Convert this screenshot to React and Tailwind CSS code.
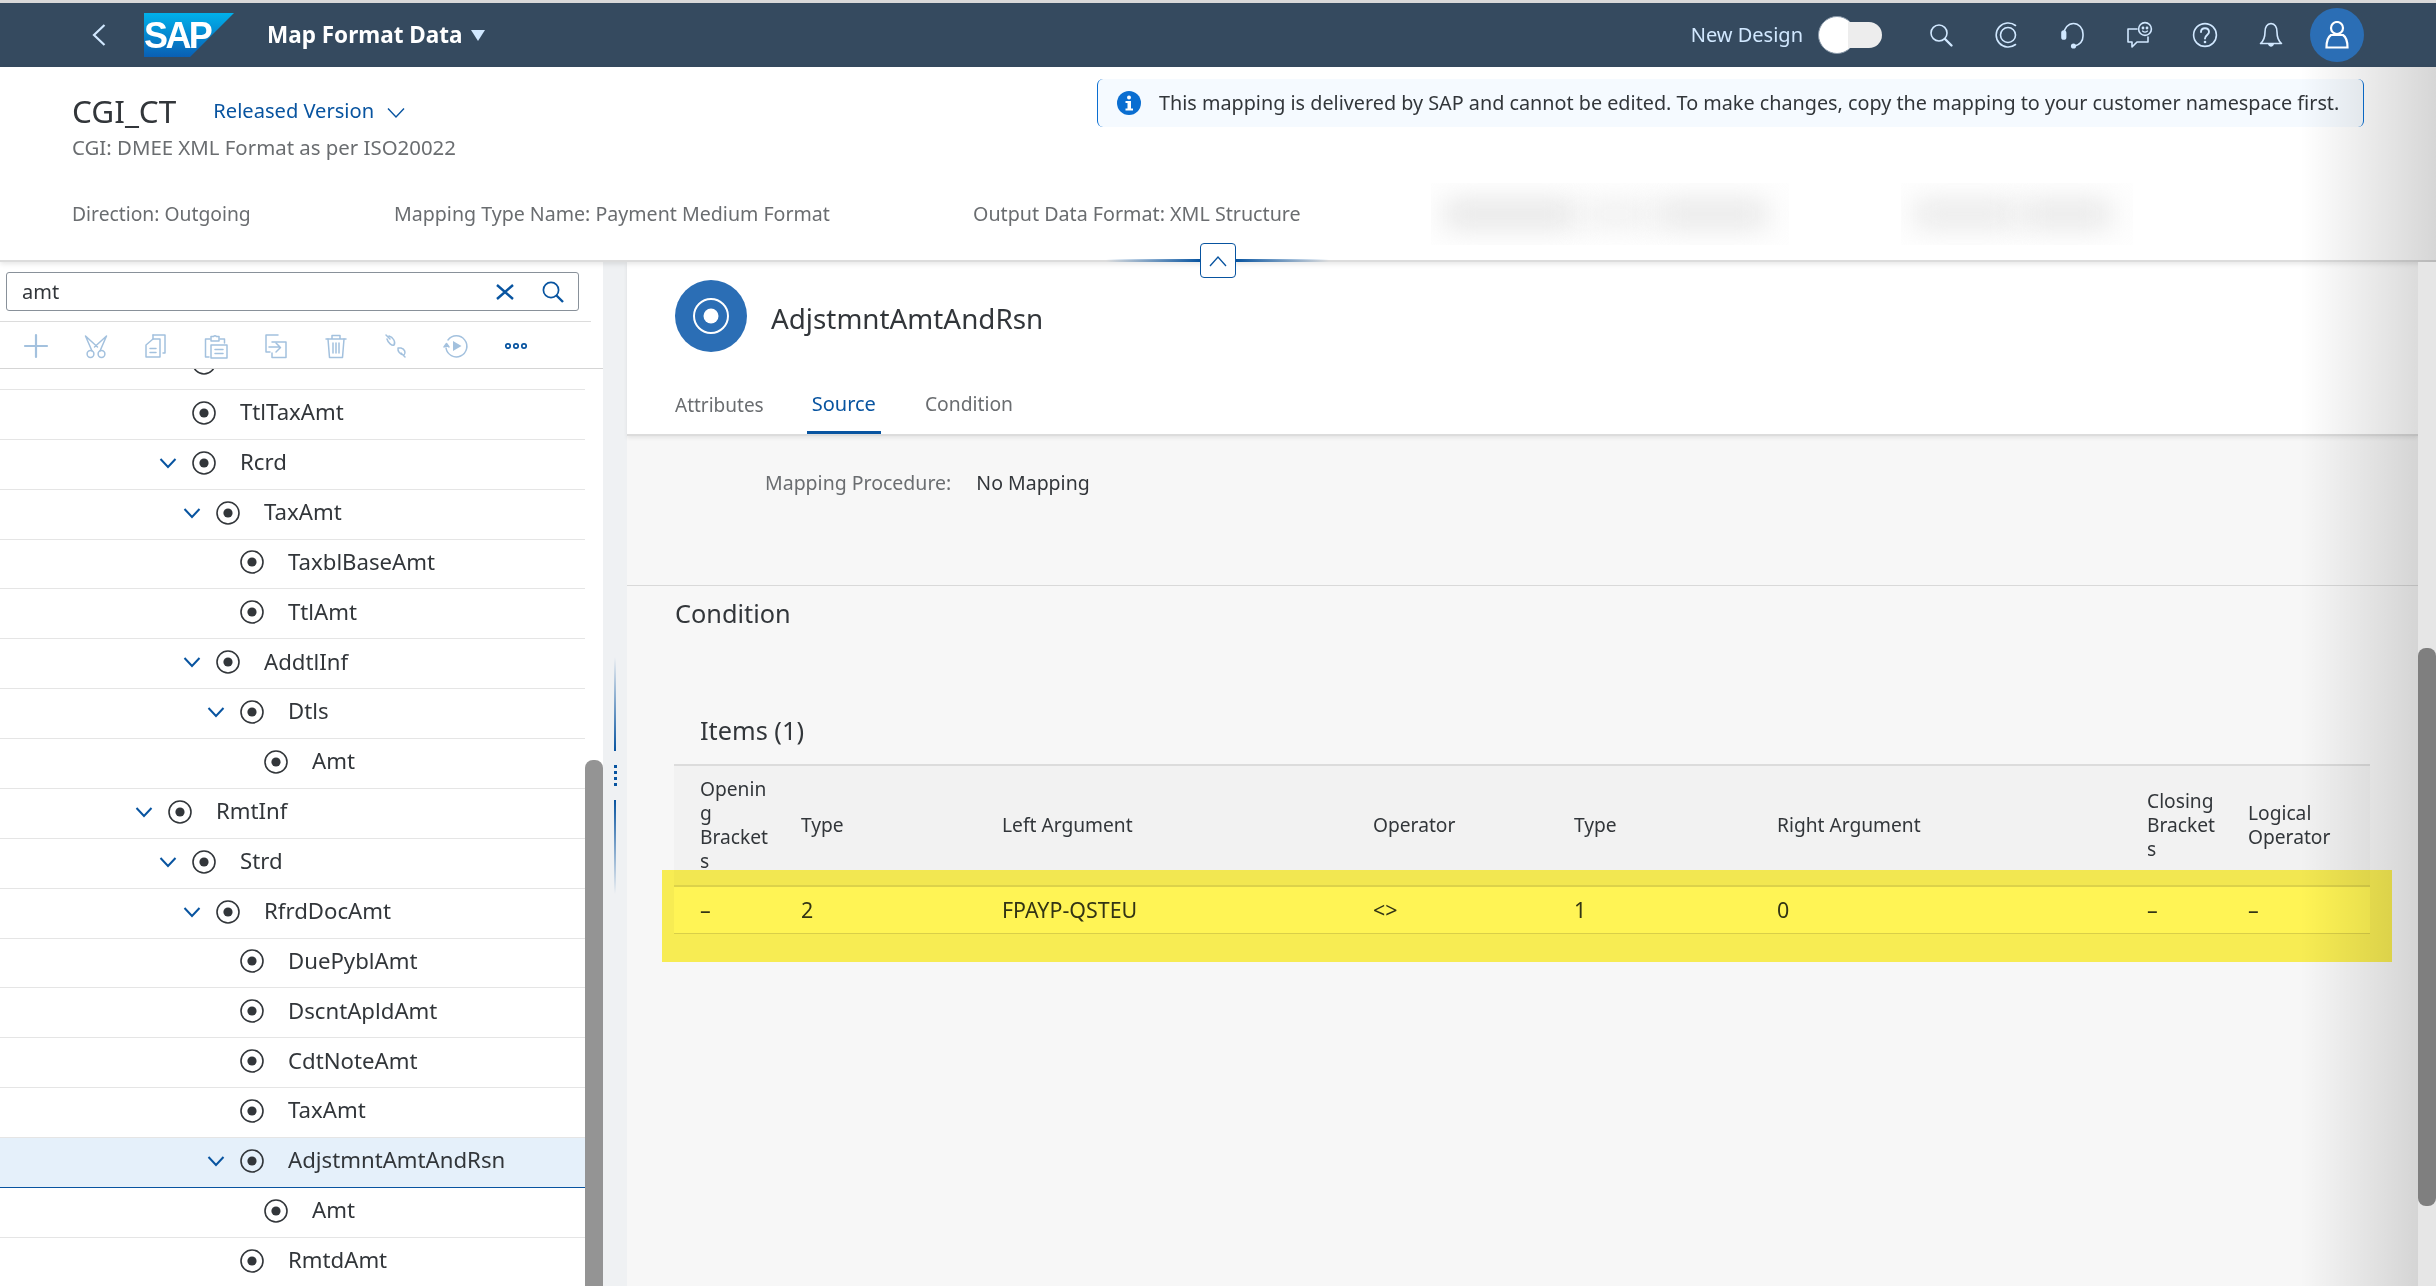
import React from "react";

const TopIcon = ({ children }) => (
  <div className="flex w-[66px] items-center justify-center">
    <svg width="28" height="28" viewBox="0 0 28 28" fill="none" stroke="#d1e8ff" strokeWidth="1.6" strokeLinecap="round" strokeLinejoin="round">
      {children}
    </svg>
  </div>
);

const TbIcon = ({ children, color = "#a3c1de" }) => (
  <div className="flex w-[60px] items-center justify-center">
    <svg width="26" height="26" viewBox="0 0 26 26" fill="none" stroke={color} strokeWidth="1.5" strokeLinecap="round" strokeLinejoin="round">
      {children}
    </svg>
  </div>
);

const NodeIcon = () => (
  <svg width="24" height="24" viewBox="0 0 24 24" className="shrink-0">
    <circle cx="12" cy="12" r="11" fill="none" stroke="#32363a" strokeWidth="1.6" />
    <circle cx="12" cy="12" r="4.6" fill="#32363a" />
  </svg>
);

const Chevron = () => (
  <svg width="20" height="12" viewBox="0 0 20 12" className="shrink-0" fill="none" stroke="#0854a0" strokeWidth="2">
    <path d="M2.5 2 L10 10 L17.5 2" />
  </svg>
);

const rows = [
  { t: "", p: "pl-[158px]" },
  { t: "TtlTaxAmt", p: "pl-[158px]" },
  { t: "Rcrd", p: "pl-[158px]", c: 1 },
  { t: "TaxAmt", p: "pl-[182px]", c: 1 },
  { t: "TaxblBaseAmt", p: "pl-[206px]" },
  { t: "TtlAmt", p: "pl-[206px]" },
  { t: "AddtlInf", p: "pl-[182px]", c: 1 },
  { t: "Dtls", p: "pl-[206px]", c: 1 },
  { t: "Amt", p: "pl-[230px]" },
  { t: "RmtInf", p: "pl-[134px]", c: 1 },
  { t: "Strd", p: "pl-[158px]", c: 1 },
  { t: "RfrdDocAmt", p: "pl-[182px]", c: 1 },
  { t: "DuePyblAmt", p: "pl-[206px]" },
  { t: "DscntApldAmt", p: "pl-[206px]" },
  { t: "CdtNoteAmt", p: "pl-[206px]" },
  { t: "TaxAmt", p: "pl-[206px]" },
  { t: "AdjstmntAmtAndRsn", p: "pl-[206px]", c: 1, s: 1 },
  { t: "Amt", p: "pl-[230px]" },
  { t: "RmtdAmt", p: "pl-[206px]" },
];

const gridCols = "grid grid-cols-[101px_201px_371px_201px_203px_370px_101px_148px]";

export default function App() {
  return (
    <div className="relative flex h-[1286px] w-[2436px] flex-col overflow-hidden bg-white font-['Noto_Sans',sans-serif] text-[19.5px] text-[#32363a]">
      {/* Shell bar */}
      <div className="h-[3px] shrink-0 bg-[#d9d9d9]" />
      <div className="flex h-[64px] shrink-0 items-center justify-between bg-[#354a5f] pl-[92px] pr-[72px] text-[#d1e8ff]">
        <div className="flex items-center">
          <svg width="14" height="22" viewBox="0 0 14 22" fill="none" stroke="#d1e8ff" strokeWidth="2.2">
            <path d="M12.5 1 L2 11 L12.5 21" />
          </svg>
          <svg width="90" height="44" viewBox="0 0 90 44" className="ml-[38px]">
            <defs>
              <linearGradient id="sapg" x1="0" y1="0" x2="0" y2="1">
                <stop offset="0" stopColor="#00b1eb" />
                <stop offset="1" stopColor="#0a5fb4" />
              </linearGradient>
            </defs>
            <path d="M0 0 H90 L46 44 H0 Z" fill="url(#sapg)" />
            <text x="0" y="35" fontFamily="Liberation Sans" fontWeight="700" fontSize="36" letterSpacing="-2.6" fill="#fff">SAP</text>
          </svg>
          <span className="ml-[33px] text-[22.5px] font-bold text-white">Map Format Data</span>
          <svg width="14" height="11" viewBox="0 0 14 11" className="ml-[9px]"><path d="M0 0 H14 L7 11 Z" fill="#d1e8ff" /></svg>
        </div>
        <div className="flex items-center">
          <span className="text-[20px]">New Design</span>
          <div className="ml-[15px] mr-[26px] flex h-[38px] w-[64px] items-center">
            <div className="h-[38px] w-[38px] shrink-0 rounded-full border border-[#8a9aaa] bg-white" />
            <div className="-ml-[8px] h-[26px] flex-1 rounded-r-[13px] bg-[#ededed]" />
          </div>
          <TopIcon>
            <circle cx="12" cy="12" r="8" />
            <path d="M18 18 L24.5 24.5" strokeWidth="2.4" />
          </TopIcon>
          <TopIcon>
            <path d="M22.5 4.5 A12 12 0 1 0 22.5 23.5" />
            <circle cx="15" cy="14" r="7.5" />
          </TopIcon>
          <TopIcon>
            <path d="M5 13 A9.5 10.5 0 0 1 24 13 V15 C24 20 20.5 23.5 16 25" />
            <rect x="3" y="10" width="3.6" height="8" rx="1.8" fill="#d1e8ff" />
            <circle cx="14.5" cy="25" r="2.6" fill="#d1e8ff" stroke="none" />
          </TopIcon>
          <TopIcon>
            <path d="M12 8 H3 V21 H7 V26 L12 21 H23 V16" />
            <circle cx="20" cy="8" r="6.4" />
            <circle cx="18" cy="7" r="0.6" fill="#d1e8ff" />
            <circle cx="22" cy="7" r="0.6" fill="#d1e8ff" />
            <path d="M17.5 10 C19 11.4 21 11.4 22.5 10" strokeWidth="1.1" />
          </TopIcon>
          <TopIcon>
            <circle cx="14" cy="14" r="11.4" />
            <path d="M10 11 C10 6 18 6 18 11 C18 14 14 14 14 17.5" strokeWidth="1.9" />
            <circle cx="14" cy="21" r="1.3" fill="#d1e8ff" stroke="none" />
          </TopIcon>
          <TopIcon>
            <path d="M14 2.5 C9 3 8 7 8 11 C8 17 6.5 20 3.5 22.5 H24.5 C21.5 20 20 17 20 11 C20 7 19 3 14 2.5 Z" />
            <path d="M11 23 C12 26.5 16 26.5 17 23 Z" fill="#d1e8ff" stroke="none" />
          </TopIcon>
          <div className="ml-[6px] flex h-[54px] w-[54px] items-center justify-center rounded-full bg-[#2b6eb5]">
            <svg width="24" height="28" viewBox="0 0 24 28" fill="none" stroke="#fff" strokeWidth="2.2">
              <circle cx="12" cy="7" r="6" />
              <path d="M6 14 H18 C21 16 22.5 19 22.5 26.5 H1.5 C1.5 19 3 16 6 14 Z" />
            </svg>
          </div>
        </div>
      </div>

      {/* Object header */}
      <div className="relative z-10 h-[195px] shrink-0 border-b-2 border-[#dcdcdc] bg-white px-[72px] shadow-[0_2px_5px_rgba(0,0,0,0.1)]">
        <div className="flex h-[116px] justify-between">
          <div className="pt-[25px]">
            <div className="flex items-center">
              <span className="text-[31.5px] leading-[38px]">CGI_CT</span>
              <span className="ml-[37px] text-[20.1px] text-[#0854a0]">Released Version</span>
              <svg width="18" height="12" viewBox="0 0 18 12" fill="none" stroke="#0854a0" strokeWidth="1.4" className="ml-[13px] mt-[3px]">
                <path d="M1 1.5 L9 10 L17 1.5" />
              </svg>
            </div>
            <div className="mt-[2px] text-[20.4px] text-[#6a6d70]">CGI: DMEE XML Format as per ISO20022</div>
          </div>
          <div className="mt-[12px] flex h-[48px] w-[1267px] items-center rounded-[6px] border-x border-[#0a6ed1] bg-[#f5faff] pl-[19px]">
            <svg width="24" height="24" viewBox="0 0 24 24" className="shrink-0">
              <circle cx="12" cy="12" r="12" fill="#0a6ed1" />
              <circle cx="12" cy="6.5" r="2" fill="#fff" />
              <path d="M8.5 10 H14 V17.5 H16 V19.5 H8.5 V17.5 H10.5 V12 H8.5 Z" fill="#fff" />
            </svg>
            <span className="ml-[18px] whitespace-nowrap text-[19.8px]">This mapping is delivered by SAP and cannot be edited. To make changes, copy the mapping to your customer namespace first.</span>
          </div>
        </div>
        <div className="flex items-center text-[#6a6d70]">
          <div className="w-[322px] whitespace-nowrap text-[19.3px]">Direction: Outgoing</div>
          <div className="w-[579px] whitespace-nowrap text-[19.6px]">Mapping Type Name: Payment Medium Format</div>
          <div className="w-[458px] whitespace-nowrap text-[19.7px]">Output Data Format: XML Structure</div>
          <div className="w-[470px]">
            <div className="flex h-[62px] w-[358px] items-center gap-[6px] overflow-hidden bg-[#fefefe] px-[14px]">
              <div className="h-[24px] w-[130px] bg-[#e2e2e2] blur-[14px]" />
              <div className="h-[20px] w-[70px] bg-[#ececec] blur-[14px]" />
              <div className="h-[24px] w-[110px] bg-[#e4e4e4] blur-[14px]" />
            </div>
          </div>
          <div className="flex h-[62px] w-[232px] items-center gap-[6px] overflow-hidden bg-[#fefefe] px-[14px]">
            <div className="h-[24px] w-[100px] bg-[#e6e6e6] blur-[14px]" />
            <div className="h-[24px] w-[90px] bg-[#e4e4e4] blur-[14px]" />
          </div>
        </div>
        {/* Collapse control sitting on the header edge */}
        <div className="absolute left-[1106px] top-[176px] flex h-[35px] w-[223px] items-center">
          <div className="h-[3px] flex-1 bg-gradient-to-r from-transparent to-[#0854a0]" />
          <div className="flex h-[35px] w-[36px] items-center justify-center rounded-[4px] border border-[#0854a0] bg-white">
            <svg width="18" height="12" viewBox="0 0 18 12" fill="none" stroke="#0854a0" strokeWidth="1.3"><path d="M1 11 L9 2 L17 11" /></svg>
          </div>
          <div className="h-[3px] flex-1 bg-gradient-to-l from-transparent to-[#0854a0]" />
        </div>
      </div>

      {/* Body */}
      <div className="flex min-h-0 flex-1">
        {/* Left tree */}
        <div className="flex w-[603px] shrink-0 flex-col">
          <div className="mx-[6px] mt-[10px] flex h-[39px] w-[573px] items-center rounded-[3px] border border-[#89919a] pl-[15px]">
            <span className="flex-1 text-[20px]">amt</span>
            <svg width="18" height="16" viewBox="0 0 18 16" fill="none" stroke="#0854a0" strokeWidth="2.4"><path d="M1 1 L17 15 M17 1 L1 15" /></svg>
            <svg width="22" height="22" viewBox="0 0 22 22" fill="none" stroke="#0854a0" strokeWidth="1.7" className="ml-[28px] mr-[14px]">
              <circle cx="9" cy="9" r="7.6" />
              <path d="M14.5 14.5 L21 21" strokeWidth="2.4" />
            </svg>
          </div>
          <div className="mt-[10px] h-px w-[591px] bg-[#dcdcdc]" />
          <div className="flex h-[47px] items-center border-b border-[#d5d5d5] pl-[6px] pt-[2px]">
            <TbIcon><path d="M13 2 V24 M2 13 H24" strokeWidth="2.2" /></TbIcon>
            <TbIcon>
              <circle cx="7.5" cy="21" r="3.4" /><circle cx="18.5" cy="21" r="3.4" />
              <path d="M9 18 L2.5 3 M17 18 L23.5 3 M2.5 3 L14.5 14 M23.5 3 L11.5 14" />
            </TbIcon>
            <TbIcon>
              <path d="M10 2 H22 V20 H20" /><path d="M10 2 V6" />
              <path d="M10 6 H17 V24 H3 V12 Z" /><path d="M7 15.5 H13 M7 19.5 H13" />
            </TbIcon>
            <TbIcon>
              <path d="M6 24 H2.5 V6 H7 M17 6 H21.5 V10" /><path d="M8 6 V3.5 H10.5 A2 2 0 0 1 13.5 3.5 H16 V6 V8 H8 Z" />
              <path d="M8 12 H24 V25 H8 Z" /><path d="M12 16.5 H20 M12 20.5 H20" />
            </TbIcon>
            <TbIcon>
              <path d="M15 2 H3 V19 H7 M9 9 H23 V24.5 H9 V20" /><path d="M6 14 H17 M13 10 L17.5 14.5 L13 19" />
            </TbIcon>
            <TbIcon>
              <path d="M3 6 H23 M9 6 V2.5 H17 V6" /><path d="M5 6 L6.5 24.5 H19.5 L21 6" />
              <path d="M10 10 V20 M13 10 V20 M16 10 V20" />
            </TbIcon>
            <TbIcon>
              <path d="M3 2 L7 6 M6 3 C10 4 13 9 11 12 C9 13 5 10 4 6" />
              <path d="M22 24 L18 20 M15 15 C14.5 18 17 22 21 22 C23 20 22 16 18 15 Z" />
            </TbIcon>
            <TbIcon>
              <path d="M5 7 A10.5 10.5 0 1 1 3 15" /><path d="M1 14 L3.5 10.5 L6 14" fill="#a3c1de" />
              <path d="M10 8 L18.5 13 L10 18 Z" fill="#a3c1de" stroke="none" />
            </TbIcon>
            <TbIcon color="#0854a0">
              <circle cx="5" cy="13" r="2.2" strokeWidth="1.7" /><circle cx="13" cy="13" r="2.2" strokeWidth="1.7" /><circle cx="21" cy="13" r="2.2" strokeWidth="1.7" />
            </TbIcon>
          </div>
          <div className="flex min-h-0 flex-1 overflow-hidden">
            <div className="-mt-[29px] w-[585px] shrink-0">
              {rows.map((r, i) => (
                <div
                  key={i}
                  className={
                    "flex h-[49.875px] items-center border-b pb-[3px] " +
                    r.p +
                    (r.s ? " border-[#0854a0] bg-[#e5f0fa]" : " border-[#e5e5e5]")
                  }
                >
                  <div className="flex w-[20px] shrink-0 justify-center">{r.c ? <Chevron /> : null}</div>
                  <div className="ml-[14px]"><NodeIcon /></div>
                  <span className="-mt-[2px] ml-[24px] whitespace-nowrap text-[22.2px]">{r.t}</span>
                </div>
              ))}
            </div>
            <div className="w-[18px] pt-[391px]">
              <div className="h-[600px] rounded-t-[8px] bg-[#949494]" />
            </div>
          </div>
        </div>

        {/* Splitter */}
        <div className="flex w-[24px] shrink-0 flex-col items-center bg-[#eff1f3] pt-[395px]">
          <div className="h-[94px] w-[2px] bg-gradient-to-b from-transparent to-[#0854a0]" />
          <div className="mt-[14px] flex flex-col gap-[3px]">
            <div className="h-[3px] w-[3px] bg-[#0854a0]" />
            <div className="h-[3px] w-[3px] bg-[#0854a0]" />
            <div className="h-[3px] w-[3px] bg-[#0854a0]" />
            <div className="h-[3px] w-[3px] bg-[#0854a0]" />
          </div>
          <div className="mt-[14px] h-[94px] w-[2px] bg-gradient-to-t from-transparent to-[#0854a0]" />
        </div>

        {/* Right detail */}
        <div className="relative min-w-0 flex-1 bg-[#f7f7f7]">
          <div className="relative flex h-[174px] flex-col border-b-2 border-[#dcdcdc] bg-white pl-[48px] shadow-[0_2px_4px_rgba(0,0,0,0.08)]">
            <div className="flex items-center pt-[18px]">
              <div className="flex h-[72px] w-[72px] items-center justify-center rounded-full bg-[#2b6eb5]">
                <svg width="40" height="40" viewBox="0 0 40 40">
                  <circle cx="20" cy="20" r="17" fill="none" stroke="#fff" strokeWidth="2" />
                  <circle cx="20" cy="20" r="7.5" fill="#fff" />
                </svg>
              </div>
              <span className="ml-[24px] mt-[5px] text-[27.8px]">AdjstmntAmtAndRsn</span>
            </div>
            <div className="mt-auto flex items-end text-[#6a6d70]">
              <div className="pb-[15px] text-[19px]">Attributes</div>
              <div className="ml-[43px] rounded-t-sm border-b-[3px] border-[#0854a0] px-[5px] pb-[12px] text-[20px] text-[#0854a0]">Source</div>
              <div className="ml-[44px] pb-[15px] text-[19.3px]">Condition</div>
            </div>
          </div>
          <div className="h-[150px] border-b border-[#d9d9d9] pl-[138px] pt-[32px]">
            <div className="flex items-center">
              <span className="text-[#6a6d70]">Mapping Procedure:</span>
              <span className="ml-[25px]">No Mapping</span>
            </div>
          </div>
          <div className="pl-[48px]">
            <div className="mt-[10px] text-[25.3px] leading-[34px]">Condition</div>
            <div className="ml-[25px] mt-[83px] text-[25.3px] leading-[34px]">Items (1)</div>
          </div>
          <div className="ml-[47px] mt-[17px] w-[1696px]">
            <div className={gridCols + " items-center border-b-2 border-t-2 border-[#dcdcdc] bg-[#f2f2f2] text-[19.2px] leading-[24px]"}>
              <div className="h-[119px] pl-[26px] pr-[3px] pt-[11px] [overflow-wrap:anywhere]">Opening Brackets</div>
              <div className="pb-[2px] pl-[26px]">Type</div>
              <div className="pb-[2px] pl-[26px]">Left Argument</div>
              <div className="pb-[2px] pl-[26px]">Operator</div>
              <div className="pb-[2px] pl-[26px]">Type</div>
              <div className="pb-[2px] pl-[26px]">Right Argument</div>
              <div className="pb-[2px] pl-[26px] pr-[3px] [overflow-wrap:anywhere]">Closing Brackets</div>
              <div className="pb-[2px] pl-[26px]">Logical Operator</div>
            </div>
            <div className={gridCols + " h-[47px] items-center border-b border-[#d9d9d9] bg-white text-[21.4px]"}>
              <div className="pl-[26px]">–</div>
              <div className="pl-[26px]">2</div>
              <div className="pl-[26px]">FPAYP-QSTEU</div>
              <div className="pl-[26px]">&lt;&gt;</div>
              <div className="pl-[26px]">1</div>
              <div className="pl-[26px]">0</div>
              <div className="pl-[26px]">–</div>
              <div className="pl-[26px]">–</div>
            </div>
          </div>
          {/* Highlight marker over the table row */}
          <div className="pointer-events-none absolute left-[35px] top-[608px] h-[92px] w-[1730px] bg-[#fff455] mix-blend-multiply" />
        </div>

        {/* Page scrollbar */}
        <div className="relative z-30 w-[18px] shrink-0 bg-[#e6e6e6]">
          <div className="mt-[386px] h-[558px] rounded-[8px] bg-[#7f7f7f]" />
        </div>
      </div>

      {/* Right edge shade */}
      <div className="pointer-events-none absolute bottom-0 right-0 top-[67px] z-20 w-[136px] bg-gradient-to-r from-transparent to-[rgba(0,0,0,0.16)]" />
    </div>
  );
}
